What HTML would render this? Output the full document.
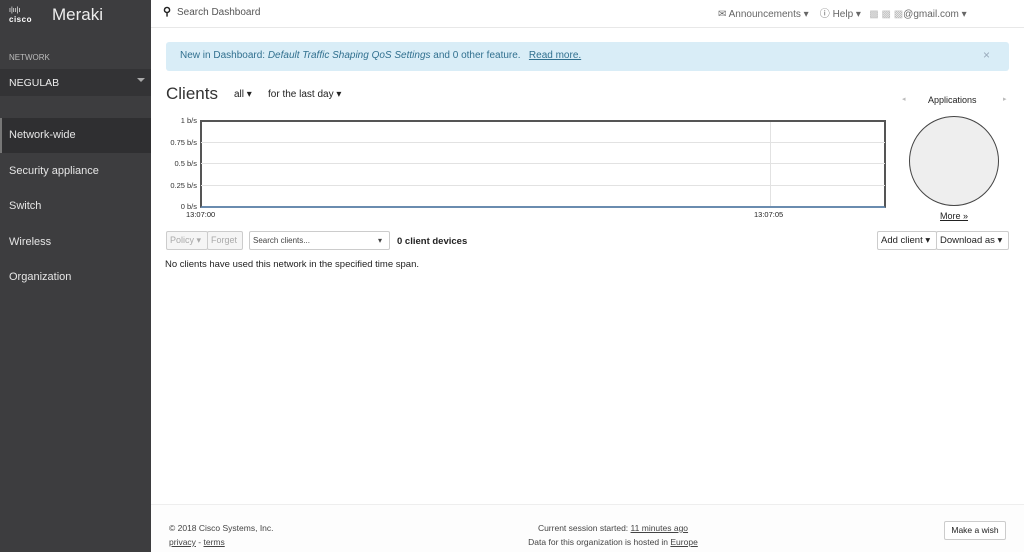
<!DOCTYPE html>
<html><head><meta charset="utf-8"><style>
*{margin:0;padding:0;box-sizing:border-box}
body{width:1024px;height:552px;overflow:hidden;font-family:"Liberation Sans",sans-serif;background:#fff;position:relative;color:#222}
.sb{position:absolute;left:0;top:0;width:151px;height:552px;background:#3d3d3f;color:#ddd}
.abs{position:absolute;white-space:nowrap}
.nav{position:absolute;left:0;width:151px;height:35px;line-height:35px;padding-left:9px;font-size:11px;color:#e6e6e6}
.u{text-decoration:underline}
.btn{position:absolute;white-space:nowrap;overflow:hidden;border:1px solid #ccc;background:#fff;font-size:10px;height:19px;line-height:17px;padding:0 3px;border-radius:2px}
.yl{position:absolute;font-size:7.5px;color:#333;text-align:right;width:40px}
.gl{position:absolute;left:201px;width:684px;height:1px;background:#e2e2e2}
</style></head><body>
<div class="sb">
  <div class="abs" style="left:9px;top:6px;font-size:9px;color:#fff;letter-spacing:.5px;line-height:9px">
    <div style="font-size:7px;letter-spacing:0">ı|ıı|ı</div><div style="font-weight:bold;font-size:8px">cisco</div></div>
  <div class="abs" style="left:52px;top:5px;font-size:17px;color:#eee">Meraki</div>
  <div class="abs" style="left:9px;top:53px;font-size:8px;color:#bbb">NETWORK</div>
  <div class="abs" style="left:0;top:69px;width:151px;height:27px;background:#333335"></div>
  <div class="abs" style="left:9px;top:77px;font-size:10.5px;color:#eee">NEGULAB</div>
  <div class="abs" style="left:137px;top:78px;width:0;height:0;border-left:4px solid transparent;border-right:4px solid transparent;border-top:4px solid #aaa"></div>
  <div class="nav" style="top:118px;background:#2f2f31;border-left:2px solid #777;padding-left:7px">Network-wide</div>
  <div class="nav" style="top:154px">Security appliance</div>
  <div class="nav" style="top:189px">Switch</div>
  <div class="nav" style="top:225px">Wireless</div>
  <div class="nav" style="top:260px">Organization</div>
</div>
<div class="abs" style="left:151px;top:27px;width:873px;height:1px;background:#e8e8e8"></div>
<div class="abs" style="left:163px;top:5px;font-size:11px;font-weight:bold">&#9906;</div>
<div class="abs" style="left:177px;top:7px;font-size:10px;color:#555">Search Dashboard</div>
<div class="abs" style="left:718px;top:5px;font-size:10px;color:#666">&#9993; Announcements ▾ &nbsp;&nbsp; ⓘ Help ▾ &nbsp;&nbsp;<span style="color:#bbb">▩ ▩ ▩</span>@gmail.com ▾</div>
<div class="abs" style="left:166px;top:42px;width:843px;height:29px;background:#d9edf7;border-radius:3px"></div>
<div class="abs" style="left:180px;top:50px;font-size:10px;color:#31708f">New in Dashboard: <i>Default Traffic Shaping QoS Settings</i> and 0 other feature. &nbsp;&nbsp;<span class="u">Read more.</span></div>
<div class="abs" style="left:983px;top:48px;font-size:12px;color:#9ab">×</div>
<div class="abs" style="left:166px;top:84px;font-size:17px;color:#333">Clients</div>
<div class="abs" style="left:234px;top:89px;font-size:10px">all ▾</div>
<div class="abs" style="left:268px;top:89px;font-size:10px">for the last day ▾</div>
<div class="abs" style="left:200px;top:120px;width:686px;height:88px;border:2px solid #555;border-bottom:2px solid #6a8caf"></div>
<div class="gl" style="top:142px"></div><div class="gl" style="top:163px"></div><div class="gl" style="top:185px"></div>
<div class="abs" style="left:770px;top:122px;width:1px;height:84px;background:#e2e2e2"></div>
<div class="yl" style="left:157px;top:116px">1 b/s</div>
<div class="yl" style="left:157px;top:138px">0.75 b/s</div>
<div class="yl" style="left:157px;top:159px">0.5 b/s</div>
<div class="yl" style="left:157px;top:181px">0.25 b/s</div>
<div class="yl" style="left:157px;top:202px">0 b/s</div>
<div class="abs" style="left:186px;top:210px;font-size:7.5px">13:07:00</div>
<div class="abs" style="left:754px;top:210px;font-size:7.5px">13:07:05</div>
<div class="abs" style="left:902px;top:95px;font-size:7px;color:#bbb">◂</div>
<div class="abs" style="left:928px;top:95px;font-size:9px">Applications</div>
<div class="abs" style="left:1003px;top:95px;font-size:7px;color:#bbb">▸</div>
<div class="abs" style="left:909px;top:116px;width:90px;height:90px;border-radius:50%;background:#eee;border:1.5px solid #444"></div>
<div class="abs u" style="left:940px;top:211px;font-size:9px">More »</div>
<div class="btn" style="left:166px;top:231px;width:42px;color:#aaa;background:#f5f5f5;font-size:9px">Policy ▾</div>
<div class="btn" style="left:207px;top:231px;width:36px;color:#aaa;background:#f5f5f5;font-size:9px">Forget</div>
<div class="btn" style="left:249px;top:231px;width:141px;color:#444;font-size:8px">Search clients...<span style="position:absolute;right:7px">▾</span></div>
<div class="abs" style="left:397px;top:236px;font-size:9.5px;font-weight:bold">0 client devices</div>
<div class="btn" style="left:877px;top:231px;width:60px;font-size:9.5px">Add client ▾</div>
<div class="btn" style="left:936px;top:231px;width:73px;font-size:9.5px">Download as ▾</div>
<div class="abs" style="left:165px;top:259px;font-size:9.5px">No clients have used this network in the specified time span.</div>
<div class="abs" style="left:151px;top:504px;width:873px;height:48px;background:#fdfdfd;border-top:1px solid #eee"></div>
<div class="abs" style="left:169px;top:521px;font-size:8.5px;color:#444;line-height:14px">© 2018 Cisco Systems, Inc.<br><span class="u">privacy</span> - <span class="u">terms</span></div>
<div class="abs" style="left:470px;top:521px;width:286px;text-align:center;font-size:8.5px;color:#444;line-height:14px">Current session started: <span class="u">11 minutes ago</span><br>Data for this organization is hosted in <span class="u">Europe</span></div>
<div class="btn" style="left:944px;top:521px;width:62px;font-size:8.5px;text-align:center">Make a wish</div>
</body></html>
